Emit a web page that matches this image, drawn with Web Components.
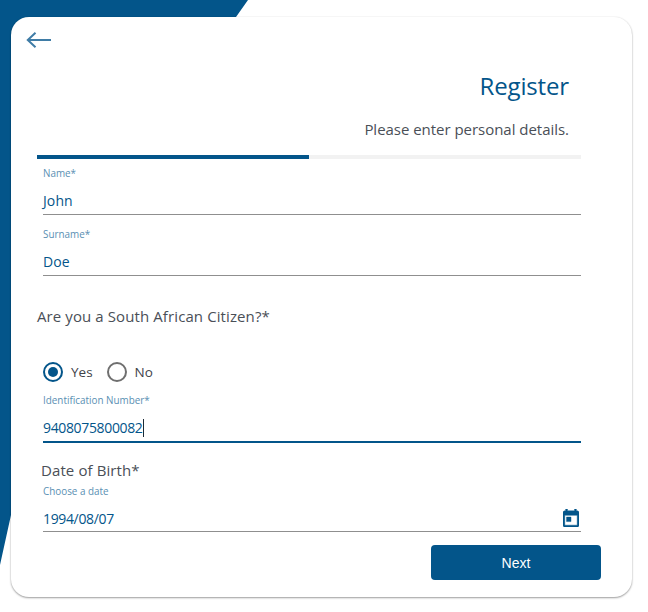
<!DOCTYPE html>
<html><head><meta charset="utf-8">
<style>
html,body{margin:0;padding:0;background:#fff;}
body{width:648px;height:612px;overflow:hidden;font-family:"Open Sans","Noto Sans","Liberation Sans",sans-serif;}
</style></head>
<body>
<register-page>
  <back-button slot="back"></back-button>
  <step-header title="Register" subtitle="Please enter personal details."></step-header>
  <progress-bar value="50"></progress-bar>
  <text-field label="Name*" value="John"></text-field>
  <text-field label="Surname*" value="Doe" style="margin-top:5px"></text-field>
  <form-question style="margin-top:30px;height:20px">Are you a South African Citizen?*</form-question>
  <radio-group style="margin-top:36px"></radio-group>
  <text-field label="Identification Number*" value="9408075800082" focused style="margin-top:4px;height:57px;--ls:-.35px"></text-field>
  <form-question style="margin-top:17px;margin-left:4px;height:20px">Date of Birth*</form-question>
  <text-field label="Choose a date" value="1994/08/07" calendar style="margin-top:-3px;height:55px;--ls:-.35px"></text-field>
  <next-button>Next</next-button>
</register-page>
<script>
function def(name,html,init){
  customElements.define(name,class extends HTMLElement{
    constructor(){super();this.attachShadow({mode:'open'}).innerHTML=typeof html==='function'?html(this):html;}
    connectedCallback(){if(init)init(this,this.shadowRoot);}
  });
}
def('register-page',`<style>
:host{display:block;position:relative;width:648px;height:612px;box-sizing:border-box;padding:17px 16px 15px 11px;}
.bg{position:absolute;inset:0;background:#03558a;clip-path:polygon(0 0,248px 0,236px 17px,11px 515px,0 565px);}
.card{position:relative;box-sizing:border-box;height:580px;background:#fff;border-radius:18px;
 box-shadow:0 1px 2px rgba(0,0,0,.38),0 0 2px rgba(0,0,0,.07);padding:15px 51px 0 26px;display:flex;flex-direction:column;}
</style><div class="bg"></div><div class="card"><slot name="back"></slot><slot></slot></div>`);
def('back-button',`<style>:host{display:block;width:26px;height:16px;margin-left:-11px}svg{display:block}</style>
<svg width="26" height="16" viewBox="0 0 26 16" fill="none" stroke="#3f7ca6" stroke-width="2"><path d="M25 8H2M9.500 .8 1.800 8l7.700 7.200"/></svg>`);
def('step-header',h=>`<style>:host{display:flex;flex-direction:column;align-items:flex-end;padding-right:12px;margin-top:22px}
h1{margin:0;font:400 24px/32px "Open Sans",sans-serif;color:#03558a;letter-spacing:-.15px}
p{margin:17px 0 0;font:400 15px/20px "Open Sans",sans-serif;color:#4a4f57;letter-spacing:-.03px}</style>
<h1>${h.getAttribute('title')}</h1><p>${h.getAttribute('subtitle')}</p>`);
def('progress-bar',`<style>:host{display:block;height:4px;background:#f2f2f2;margin-top:16px}div{width:50%;height:100%;background:#03558a}</style><div></div>`);
def('text-field',h=>`<style>:host{display:block;height:56px;box-sizing:border-box;margin-left:6px;position:relative;padding-top:8px;border-bottom:1px solid #8f8f8f}
:host([focused]){border-bottom:2px solid #03558a}
.l{font:400 9.9px/13px "Open Sans",sans-serif;color:#5a8fb3}
.v{margin-top:11px;font:400 14px/20px "Open Sans",sans-serif;color:#03558a;letter-spacing:var(--ls,.1px);display:flex;align-items:center}
i{display:inline-block;width:1px;height:18px;background:#1c2b36}
svg{position:absolute;right:2px;top:32px}
</style><div class="l">${h.getAttribute('label')}</div><div class="v">${h.getAttribute('value')}${h.hasAttribute('focused')?'<i></i>':''}</div>
${h.hasAttribute('calendar')?'<svg width="16" height="18" viewBox="3 1 18 20" preserveAspectRatio="none"><path fill="#03558a" stroke="#03558a" stroke-width=".5" d="M19 3h-1V1h-2v2H8V1H6v2H5c-1.100 0-2 .9-2 2v14c0 1.100.9 2 2 2h14c1.100 0 2-.9 2-2V5c0-1.100-.9-2-2-2zm0 16H5V8h14v11zM7 10h5v5H7z"/></svg>':''}`);
def('form-question',`<style>:host{display:block;font:400 15px/20px "Open Sans",sans-serif;color:#4a4f57;letter-spacing:.1px}</style><slot></slot>`);
def('radio-option',h=>`<style>:host{display:flex;align-items:center;gap:8px;font:400 13.500px/20px "Open Sans",sans-serif;color:#3f4349}
.r{width:20px;height:20px;box-sizing:border-box;border:2px solid #6f6f6f;border-radius:50%;display:flex;align-items:center;justify-content:center}
:host([checked]) .r{border-color:#03558a}
:host([checked]) .r::after{content:"";width:10px;height:10px;border-radius:50%;background:#03558a}
</style><span class="r"></span><span>${h.getAttribute('label')}</span>`);
def('radio-group',`<style>:host{display:flex;gap:14px;margin-left:6px;height:20px}</style>
<radio-option label="Yes" checked></radio-option><radio-option label="No"></radio-option>`);
def('next-button',`<style>:host{display:flex;justify-content:flex-end;margin:13px -20px 0 0}
button{width:170px;height:35px;border:0;border-radius:4px;background:#03558a;color:#fff;font:400 14px "Liberation Sans",Arial,sans-serif;padding:0}</style>
<button><slot></slot></button>`);
</script>
</body></html>
